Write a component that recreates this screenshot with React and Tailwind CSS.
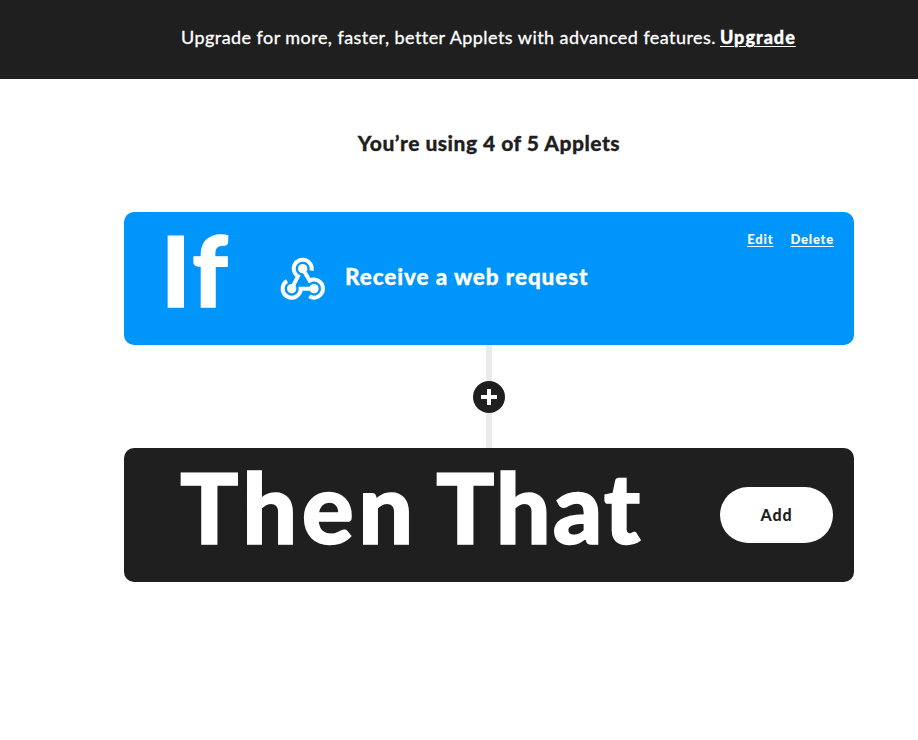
function WebhookIcon() {
  return (
    <svg viewBox="30 35 138 130" className="h-[43.33px] w-[46px] shrink-0" fill="none" stroke="white" strokeWidth="12">
      <path d="M124.500 76A27 27 0 1 0 84 93L65 130" />
      <path d="M98 70L119 106A27 27 0 1 1 118 153" />
      <path d="M132 130H92A27 27 0 1 1 51 107" />
      <circle cx="98" cy="70" r="14" fill="white" stroke="none" />
      <circle cx="65" cy="130" r="14" fill="white" stroke="none" />
      <circle cx="132" cy="130" r="14" fill="white" stroke="none" />
    </svg>
  );
}

export default function App() {
  return (
    <div className="min-h-[740px] w-[918px] overflow-hidden bg-white font-['Lato',sans-serif] text-[#1f1f1f]">
      <header className="flex h-[79px] bg-[#1f1f1f] pt-[24px] pl-[181px] text-[18px] leading-[26px] whitespace-nowrap text-white">
        <p className="w-[539px] tracking-[0.45px] [-webkit-text-stroke:0.3px_white]">Upgrade for more, faster, better Applets with advanced features.</p>
        <a className="font-black tracking-[1px] underline decoration-1 underline-offset-2 [-webkit-text-stroke:0.3px_white]">Upgrade</a>
      </header>
      <main className="ml-[124px] w-[730px]">
        <h1 className="pt-[48px] text-center text-[21px] leading-8 font-black tracking-[0.5px] [-webkit-text-stroke:0.3px_#1f1f1f]">You’re using 4 of 5 Applets</h1>
        <section className="mt-[53px] flex h-[133px] rounded-[10px] bg-[#0095fb] text-white">
          <div className="w-[156px] shrink-0 pl-[37px] text-[98px] leading-[115px] font-black tracking-[3px] [-webkit-text-stroke:1.5px_white]">If</div>
          <div className="flex h-[133px] items-center">
            <WebhookIcon />
            <h2 className="ml-[19px] pb-[4px] text-[22.5px] leading-[30px] font-black tracking-[0.9px] whitespace-nowrap [-webkit-text-stroke:0.3px_white]">Receive a web request</h2>
          </div>
          <nav className="mr-[20px] ml-auto flex gap-[17px] pt-[17px] text-[13px] leading-5 font-black tracking-[0.8px]">
            <a className="underline decoration-1 underline-offset-2">Edit</a>
            <a className="underline decoration-1 underline-offset-2">Delete</a>
          </nav>
        </section>
        <div className="flex h-[103px] flex-col items-center">
          <div className="h-[36px] w-[6px] bg-[#ebebeb]" />
          <button className="flex size-8 items-center justify-center rounded-full bg-[#1f1f1f]">
            <svg viewBox="0 0 16 16" className="size-4" fill="white"><path d="M6 0h4v6h6v4h-6v6H6v-6H0V6h6z" /></svg>
          </button>
          <div className="w-[6px] grow bg-[#ebebeb]" />
        </div>
        <section className="flex h-[134px] rounded-[10px] bg-[#1f1f1f] text-white">
          <div className="flex pt-[1px] pl-[56px] text-[97px] leading-[115px] font-black whitespace-nowrap [-webkit-text-stroke:1.5px_white]">
            <span className="w-[256px] tracking-[4.5px]">Then </span>
            <span className="tracking-[2px]">That</span>
          </div>
          <button className="mt-[39px] mr-[21px] ml-auto h-14 w-[113px] rounded-full bg-white text-[16px] font-black tracking-[0.9px] text-[#1f1f1f]">Add</button>
        </section>
      </main>
    </div>
  );
}
